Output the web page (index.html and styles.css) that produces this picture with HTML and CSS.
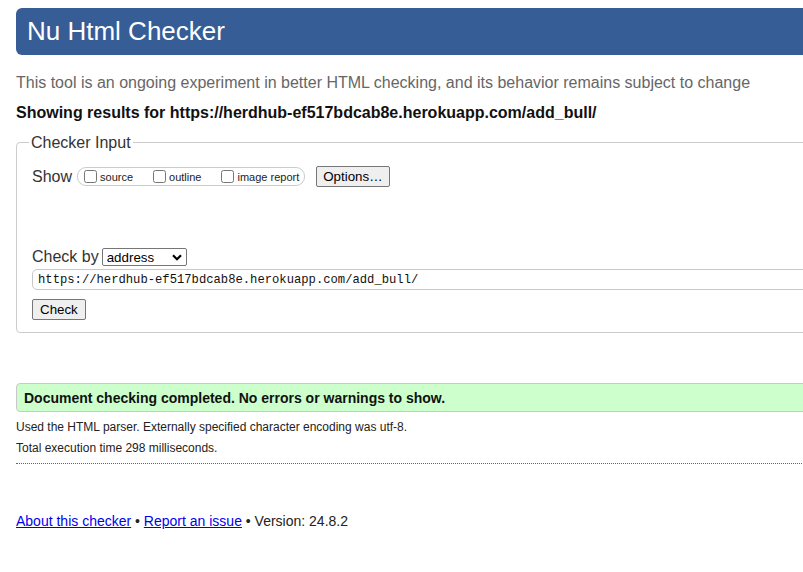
FILE: index.html
```html
<!DOCTYPE html>
<html lang="en">
<head>
<meta charset="utf-8">
<title>Nu Html Checker</title>
<link rel="stylesheet" href="styles.css">
</head>
<body>
<h1 class="title">Nu Html Checker</h1>
<p class="intro">This tool is an ongoing experiment in better HTML checking, and its behavior remains subject to change</p>
<p class="showing">Showing results for https://herdhub-ef517bdcab8e.herokuapp.com/add_bull/</p>
<form class="checker">
  <fieldset class="input-set">
    <legend class="input-legend">Checker Input</legend>
    <div class="show-row">
      <span class="row-label">Show</span>
      <span class="show-group">
        <label class="opt"><input type="checkbox" class="cb">source</label>
        <label class="opt"><input type="checkbox" class="cb">outline</label>
        <label class="opt opt-last"><input type="checkbox" class="cb">image report</label>
      </span>
      <button type="button" class="btn btn-options">Options…</button>
    </div>
    <div class="by-row">
      <span class="row-label">Check by</span>
      <span class="sel-wrap">
        <select class="sel"><option>address</option></select>
        <svg class="chev" width="10" height="7" viewBox="0 0 10 7"><path d="M1 1.2 L5 5.2 L9 1.2" fill="none" stroke="#000" stroke-width="2.2"/></svg>
      </span>
    </div>
    <input class="url" type="text" value="https://herdhub-ef517bdcab8e.herokuapp.com/add_bull/">
    <div class="btn-row"><button type="button" class="btn btn-check">Check</button></div>
  </fieldset>
</form>
<div class="success">Document checking completed. No errors or warnings to show.</div>
<p class="meta meta-first">Used the HTML parser. Externally specified character encoding was utf-8.</p>
<p class="meta">Total execution time 298 milliseconds.</p>
<div class="sep"></div>
<p class="footer"><a href="#" class="link">About this checker</a> • <a href="#" class="link">Report an issue</a> • Version: 24.8.2</p>
</body>
</html>
```

FILE: styles.css
```css
html {
  overflow: hidden;
  background: #fff;
}
body {
  margin: 0 0 0 16px;
  width: 1000px;
  font-family: "Liberation Sans", Arial, sans-serif;
  color: #222;
}
.title {
  margin: 8px 0 0;
  height: 47px;
  box-sizing: border-box;
  padding: 1px 11px 1px;
  line-height: 45px;
  font-size: 26px;
  font-weight: normal;
  background: #365d95;
  color: #fff;
  border-radius: 6px;
}
.intro {
  margin: 18px 0 0;
  font-size: 16px;
  line-height: 19px;
  color: #666;
}
.showing {
  margin: 11px 0 0;
  font-size: 16px;
  line-height: 19px;
  font-weight: bold;
  color: #111;
}
.checker {
  margin: 11px 0 0;
}
.input-set {
  margin: 0;
  padding: 0 15px 12px;
  border: 1px solid #ccc;
  border-radius: 4px;
  color: #333;
}
.input-legend {
  margin-left: -3px;
  padding: 0 2px;
  font-size: 16px;
  line-height: 19px;
}
.show-row {
  margin-top: 14px;
  display: flex;
  align-items: center;
  height: 21px;
}
.row-label {
  font-size: 16px;
  line-height: 19px;
}
.show-row .row-label {
  margin-right: 5px;
}
.show-group {
  display: inline-flex;
  align-items: center;
  height: 19px;
  box-sizing: border-box;
  border: 1px solid #ccc;
  border-radius: 9px;
  padding: 0 5px 0 2px;
}
.opt {
  display: inline-flex;
  align-items: center;
  font-size: 11px;
  margin-right: 16px;
  color: #222;
}
.opt-last {
  margin-right: 0;
}
.cb {
  width: 13px;
  height: 13px;
  margin: 0 3px 0 4px;
}
.btn {
  font-family: "Liberation Sans", Arial, sans-serif;
  font-size: 13.33px;
  line-height: 15px;
  padding: 2px 6px 2px;
  border: 1px solid #767676;
  border-radius: 2px;
  background: #efefef;
  color: #000;
}
.btn-check {
  padding: 2px 7px 2px;
}
.btn-options {
  margin-left: 11px;
}
.by-row {
  margin-top: 60px;
  display: flex;
  align-items: center;
  height: 19px;
}
.by-row .row-label {
  margin-right: 3px;
}
.sel-wrap {
  position: relative;
  display: inline-block;
  height: 18px;
}
.sel {
  appearance: none;
  -webkit-appearance: none;
  width: 85px;
  height: 18px;
  box-sizing: border-box;
  border: 1px solid #767676;
  border-radius: 2px;
  background: #fff;
  padding: 0 0 0 4px;
  font-family: "Liberation Sans", Arial, sans-serif;
  font-size: 13.33px;
  color: #000;
}
.chev {
  position: absolute;
  right: 5px;
  top: 6px;
}
.url {
  display: block;
  margin-top: 3px;
  width: 100%;
  height: 21px;
  box-sizing: border-box;
  border: 1px solid #c8c8c8;
  border-radius: 5px;
  padding: 0 5px;
  font-family: "Liberation Mono", "Courier New", monospace;
  font-size: 12.2px;
  color: #111;
  background: #fff;
}
.btn-row {
  margin-top: 9px;
  display: flex;
}
.success {
  margin-top: 50px;
  border: 1px solid #c8c8c8;
  border-radius: 4px;
  background: #ccffcc;
  padding: 6px 7px 5px;
  font-size: 14px;
  line-height: 16px;
  font-weight: bold;
  color: #111;
}
.meta {
  margin: 7px 0 0;
  font-size: 12px;
  line-height: 14px;
  color: #222;
}
.meta-first {
  margin-top: 8px;
}
.sep {
  margin-top: 8px;
  border-top: 1px dotted #666;
}
.footer {
  margin: 49px 0 0;
  font-size: 14px;
  line-height: 16px;
  color: #222;
}
.link {
  color: #0000ee;
}
```
